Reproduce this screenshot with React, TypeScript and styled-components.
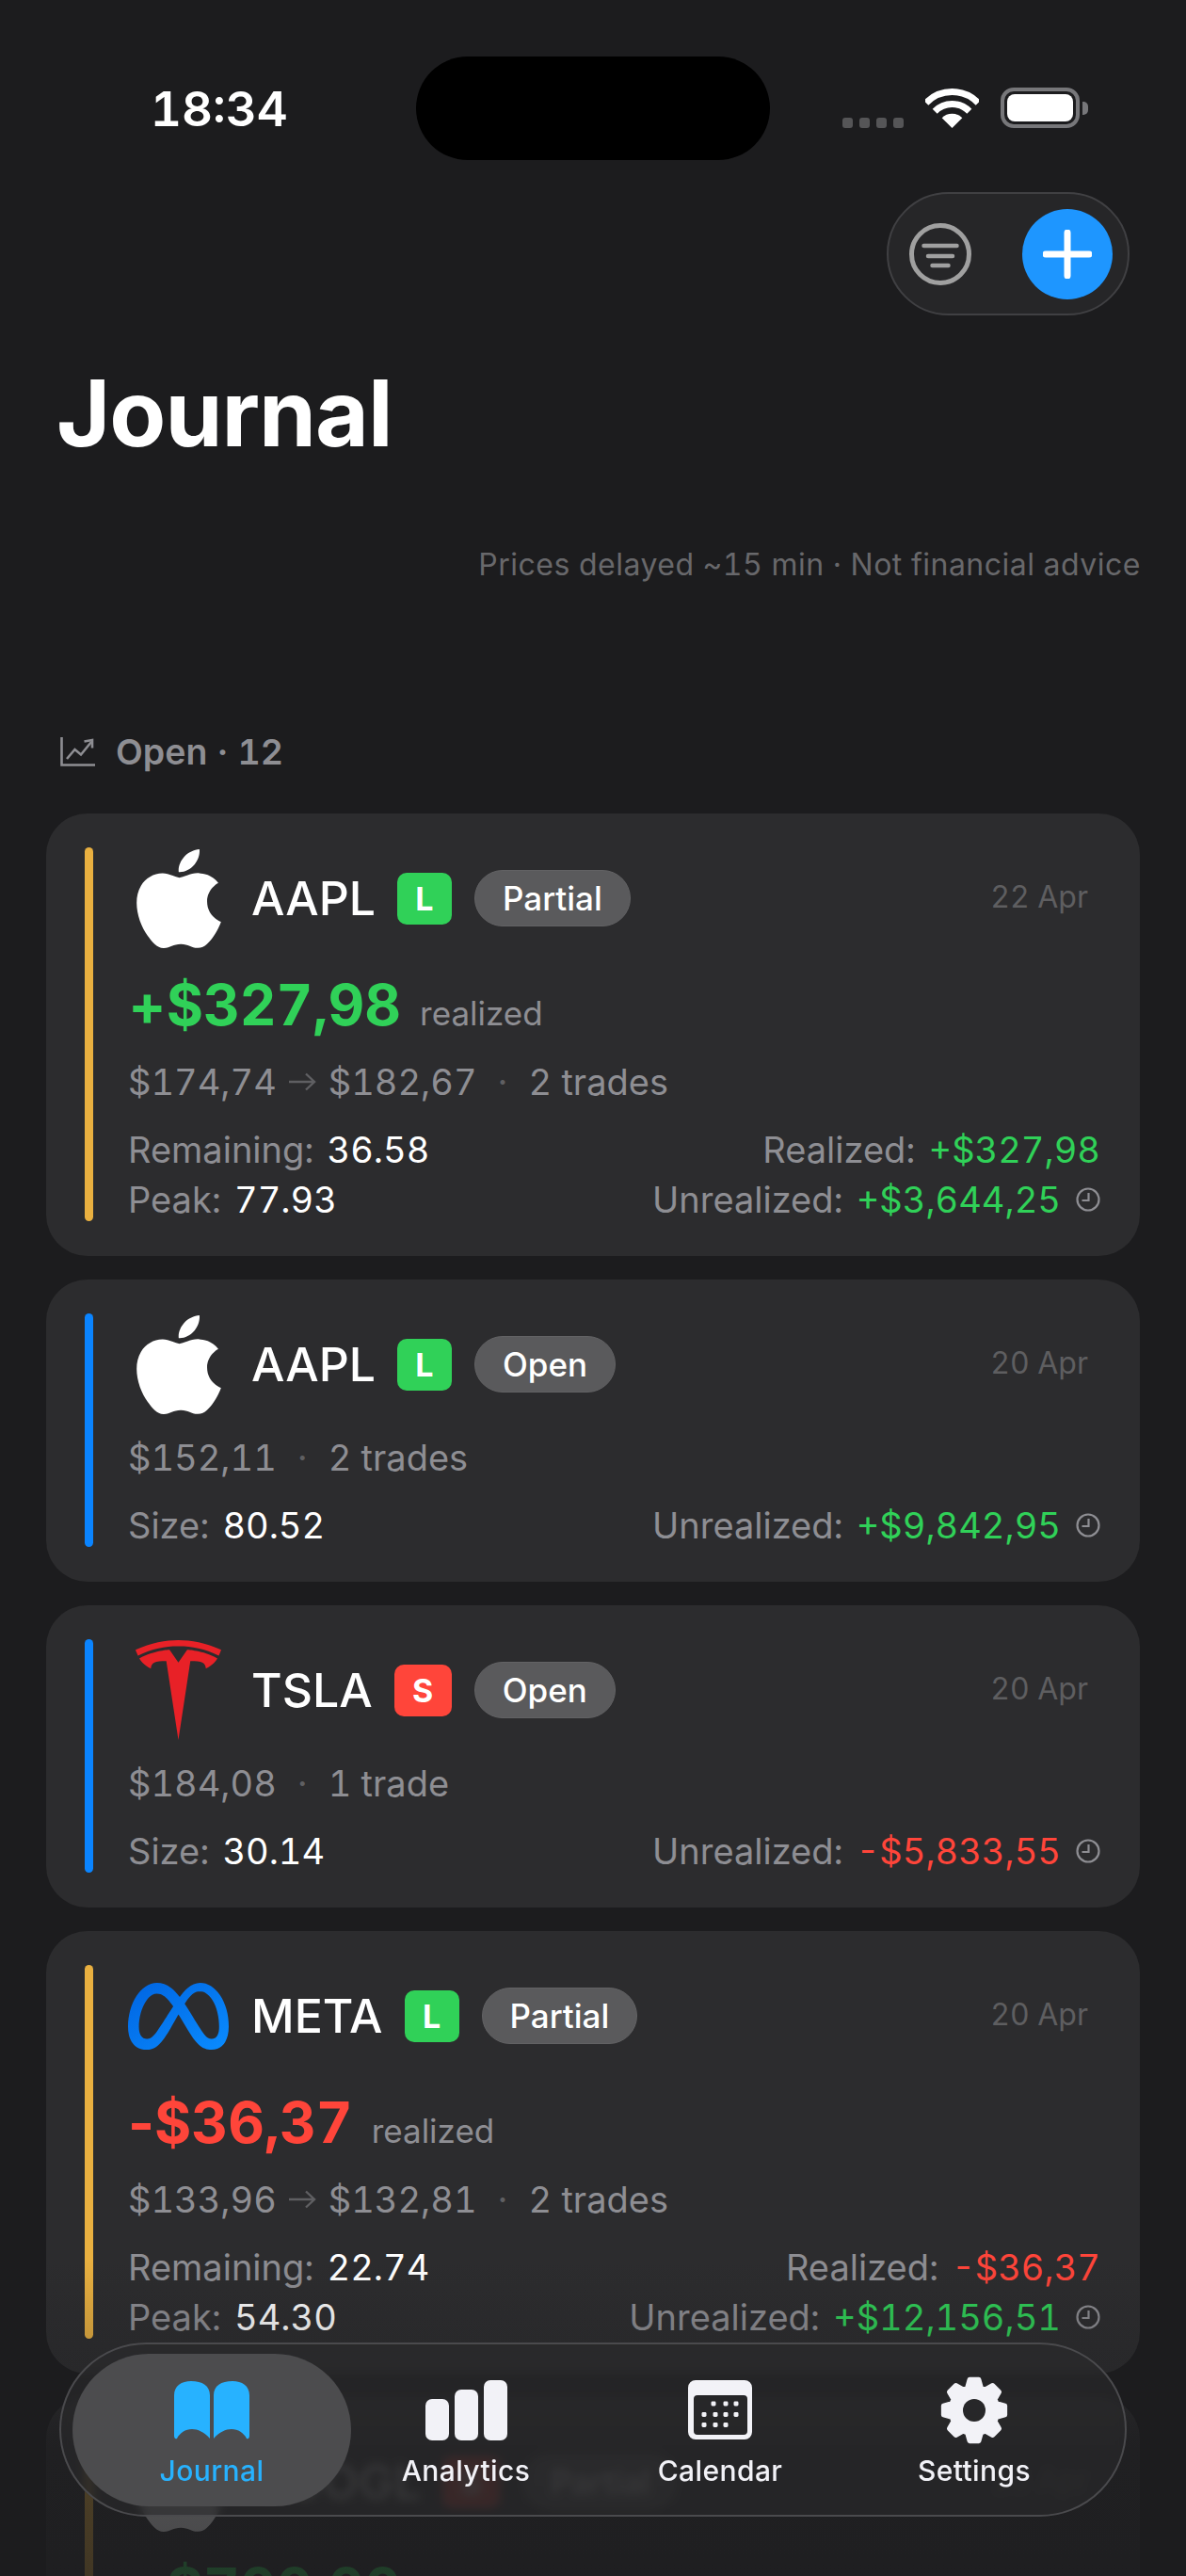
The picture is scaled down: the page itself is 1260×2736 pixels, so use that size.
import React from 'react';
import styled, { createGlobalStyle } from 'styled-components';
import { SiApple, SiTesla } from 'react-icons/si';

const GlobalStyle = createGlobalStyle`
  html, body { margin: 0; padding: 0; background: #1c1c1e; }
  * { box-sizing: border-box; }
`;

const Screen = styled.div`
  position: relative;
  width: 1260px;
  height: 2736px;
  overflow: hidden;
  padding-top: 60px;
  background: #1c1c1e;
  color: #fff;
  font-family: Inter, "Liberation Sans", sans-serif;
  font-variant-numeric: tabular-nums;
`;

const StatusBar = styled.div`
  display: grid;
  grid-template-columns: 442px 376px 1fr;
  height: 110px;
`;

const Time = styled.div`
  padding: 25px 0 0 160px;
  font-size: 51px;
  line-height: 62px;
  font-weight: 600;
`;

const Island = styled.div`
  background: #000;
  border-radius: 55px;
`;

const StatusIcons = styled.div`
  display: flex;
  align-items: flex-end;
  height: 76px;
  padding-left: 77px;
`;

const SignalDots = styled.div`
  display: flex;
  gap: 7px;
  margin-right: 23px;
`;

const SignalDot = styled.span`
  width: 11px;
  height: 11px;
  border-radius: 3px;
  background: #555557;
`;

const Battery = styled.div`
  display: flex;
  align-items: center;
  margin-left: 23px;
`;

const BatteryBody = styled.div`
  width: 84px;
  height: 43px;
  padding: 3px;
  border: 4px solid #77777a;
  border-radius: 14px;
`;

const BatteryFill = styled.div`
  height: 100%;
  border-radius: 8px;
  background: #fff;
`;

const BatteryCap = styled.div`
  width: 6px;
  height: 14px;
  margin-left: 3px;
  border-radius: 0 5px 5px 0;
  background: #77777a;
`;

const Controls = styled.div`
  display: flex;
  justify-content: flex-end;
  margin-top: 34px;
  padding-right: 60px;
`;

const ControlPill = styled.div`
  display: flex;
  align-items: center;
  justify-content: space-between;
  width: 258px;
  height: 131px;
  padding: 0 16px 0 22px;
  border: 2px solid #404043;
  border-radius: 66px;
  background: #262628;
`;

const AddButton = styled.div`
  display: flex;
  align-items: center;
  justify-content: center;
  width: 96px;
  height: 96px;
  border-radius: 50%;
  background: #1e96ff;
`;

const Title = styled.h1`
  margin: 46px 0 0 60px;
  font-size: 98px;
  line-height: 116px;
  font-weight: 700;
  letter-spacing: -1px;
`;

const Disclaimer = styled.div`
  margin-top: 83px;
  padding-right: 48px;
  text-align: right;
  font-size: 32px;
  line-height: 40px;
  letter-spacing: 0.5px;
  color: #68686b;
`;

const SectionHead = styled.div`
  display: flex;
  align-items: center;
  gap: 22px;
  height: 44px;
  margin-top: 156px;
  padding-left: 64px;
  font-size: 37.5px;
  font-weight: 600;
  color: #8e8e93;
`;

const CardList = styled.div`
  display: flex;
  flex-direction: column;
  gap: 25px;
  margin-top: 44px;
  padding: 0 49px;
`;

const Card = styled.div`
  display: flex;
  gap: 37px;
  padding: 36px 42px 37px 41px;
  border-radius: 44px;
  background: #2c2c2e;
`;

const AccentBar = styled.div<{ $color: string }>`
  flex: 0 0 9px;
  border-radius: 5px;
  background: ${p => p.$color};
`;

const CardBody = styled.div`
  flex: 1;
  min-width: 0;
`;

const CardHeader = styled.div`
  display: flex;
  align-items: center;
  height: 108px;
`;

const LogoBox = styled.div`
  display: flex;
  align-items: center;
  justify-content: center;
  flex: 0 0 107px;
  margin-right: 24px;
`;

const AppleLogo = styled(SiApple)`
  flex: none;
  width: 110px;
  height: 105px;
  margin: 0 -2px;
  color: #fff;
`;

const TeslaLogo = styled(SiTesla)`
  width: 91px;
  height: 106px;
  color: #e82127;
`;

const Ticker = styled.div`
  margin-right: 23px;
  font-size: 50px;
  font-weight: 500;
`;

const SideBadge = styled.div<{ $short: boolean }>`
  display: flex;
  align-items: center;
  justify-content: center;
  width: ${p => (p.$short ? 61 : 58)}px;
  height: 55px;
  margin-right: 24px;
  border-radius: 10px;
  font-size: 34px;
  font-weight: 700;
  background: ${p => (p.$short ? '#ff453a' : '#30d158')};
`;

const StatusPill = styled.div`
  height: 60px;
  padding: 0 29px;
  border: 1px solid #626264;
  border-radius: 30px;
  font-size: 35px;
  line-height: 58px;
  font-weight: 500;
  background: #5a5a5c;
`;

const DateText = styled.div`
  margin-left: auto;
  padding: 0 13px 3px 0;
  font-size: 32px;
  color: #5e5e60;
`;

const RealizedRow = styled.div`
  display: flex;
  align-items: baseline;
  gap: 20px;
  height: 70px;
  margin-top: 24px;
  line-height: 70px;
`;

const BigAmount = styled.div<{ $color: string }>`
  font-size: 60px;
  font-weight: 700;
  color: ${p => p.$color};
`;

const BigSign = styled.span`
  font-variant-numeric: normal;
`;

const RealizedCaption = styled.div`
  font-size: 35px;
  color: #8e8e93;
`;

const PriceRow = styled.div`
  display: flex;
  align-items: center;
  height: 46px;
  margin-top: 24px;
  font-size: 38px;
  color: #8e8e93;

  ${CardHeader} + & {
    margin-top: 22px;
  }
`;

const PriceArrow = styled.svg`
  margin: 0 13px;
`;

const Dot = styled.span`
  margin: 0 22px;
  color: #5f5f62;
`;

const InfoBlock = styled.div`
  display: flex;
  flex-direction: column;
  gap: 7px;
  margin-top: 26px;
`;

const InfoRow = styled.div`
  display: flex;
  align-items: center;
  justify-content: space-between;
  height: 46px;
  font-size: 38px;
`;

const InfoText = styled.div`
  display: flex;
  align-items: center;
  color: #8e8e93;
`;

const InfoValue = styled.span<{ $color?: string }>`
  margin-left: 14px;
  color: ${p => p.$color ?? '#fff'};
`;

const ClockIcon = styled.svg`
  margin-left: 16px;
`;

const Fade = styled.div`
  position: absolute;
  left: 0;
  right: 0;
  bottom: 0;
  height: 336px;
  background: linear-gradient(
    to bottom,
    rgba(28, 28, 30, 0) 0,
    rgba(28, 28, 30, 0.25) 120px,
    rgba(28, 28, 30, 0.75) 200px,
    rgba(28, 28, 30, 0.82) 100%
  );
  pointer-events: none;
`;

const TabBar = styled.div`
  position: absolute;
  left: 63px;
  bottom: 63px;
  display: grid;
  grid-template-columns: repeat(4, 1fr);
  align-items: center;
  width: 1134px;
  height: 185px;
  padding: 0 25px;
  border: 2px solid #4a4a4d;
  border-radius: 93px;
  background: rgba(42, 42, 44, 0.6);
  backdrop-filter: blur(5px);
`;

const Tab = styled.div<{ $active?: boolean }>`
  position: relative;
  display: flex;
  flex-direction: column;
  align-items: center;
  gap: 10px;
  height: 162px;
  padding-top: 24px;
  font-size: 30px;
  line-height: 36px;
  font-weight: 500;
  letter-spacing: 0.4px;
  color: ${p => (p.$active ? '#27b2ff' : '#f2f2f7')};

  &::before {
    content: '';
    display: ${p => (p.$active ? 'block' : 'none')};
    position: absolute;
    inset: 0 -13px;
    border-radius: 81px;
    background: #4c4c4e;
  }
`;

const TabIcon = styled.div`
  position: relative;
  display: flex;
  align-items: center;
  justify-content: center;
  height: 72px;
`;

const TabLabel = styled.div`
  position: relative;
`;

const GREEN = '#30d158';
const RED = '#ff453a';
const AMBER = '#e9b040';
const BLUE = '#0a84ff';

const META_PATH =
  'M6.915 4.03c-1.968 0-3.683 1.28-4.871 3.113C.704 9.208 0 11.883 0 14.449c0 .706.07 1.369.21 1.973a6.624 6.624 0 0 0 .265.86 5.297 5.297 0 0 0 .371.761c.696 1.159 1.818 1.927 3.593 1.927 1.497 0 2.633-.671 3.965-2.444.76-1.012 1.144-1.626 2.663-4.32l.756-1.339.186-.325c.061.1.121.196.183.3l2.152 3.595c.724 1.21 1.665 2.556 2.47 3.314 1.046.987 1.992 1.22 3.06 1.22 1.075 0 1.876-.355 2.455-.843a3.743 3.743 0 0 0 .81-.973c.542-.939.861-2.127.861-3.745 0-2.72-.681-5.357-2.084-7.45-1.282-1.912-2.957-2.93-4.716-2.93-1.047 0-2.088.467-3.053 1.308-.652.57-1.257 1.29-1.82 2.05-.69-.875-1.335-1.547-1.958-2.056-1.182-.966-2.315-1.303-3.454-1.303zm10.16 2.053c1.147 0 2.188.758 2.992 1.999 1.132 1.748 1.647 4.195 1.647 6.4 0 1.548-.368 2.9-1.839 2.9-.58 0-1.027-.23-1.664-1.004-.496-.601-1.343-1.878-2.832-4.358l-.617-1.028a44.908 44.908 0 0 0-1.255-1.98c.07-.109.141-.224.211-.327 1.12-1.667 2.118-2.602 3.358-2.602zm-10.201.553c1.265 0 2.058.791 2.675 1.446.307.327.737.871 1.234 1.579l-1.02 1.566c-.757 1.163-1.882 3.017-2.837 4.338-1.191 1.649-1.81 1.817-2.486 1.817-.524 0-1.038-.237-1.383-.794-.263-.426-.464-1.13-.464-2.046 0-2.221.63-4.535 1.66-6.088.454-.687.964-1.226 1.533-1.533a2.264 2.264 0 0 1 1.088-.285z';

const MetaLogo = () => (
  <svg width="107" height="107" viewBox="0 0 24 24">
    <defs>
      <linearGradient id="metaBlue" x1="0" y1="0" x2="1" y2="1">
        <stop offset="0" stopColor="#0064e1" />
        <stop offset="1" stopColor="#0a8cff" />
      </linearGradient>
    </defs>
    <path fill="url(#metaBlue)" d={META_PATH} />
  </svg>
);

const WifiIcon = () => (
  <svg width="57" height="42" viewBox="0 0 57 42" fill="none">
    <path d="M.8 15.3A38.5 38.5 0 0 1 56.2 15.3" stroke="#fff" strokeWidth="7" />
    <path d="M10.2 24.3A25.5 25.5 0 0 1 46.8 24.3" stroke="#fff" strokeWidth="7" />
    <path d="M28.5 42L17.7 31.2A15.3 15.3 0 0 1 39.3 31.2Z" fill="#fff" />
  </svg>
);

const FilterIcon = () => (
  <svg width="66" height="66" viewBox="0 0 66 66" fill="none" stroke="#a0a0a0">
    <circle cx="33" cy="33" r="30.5" strokeWidth="5" />
    <g strokeWidth="4.5" strokeLinecap="round">
      <path d="M15.5 24h35" />
      <path d="M20 35h26" />
      <path d="M24.5 45h17" />
    </g>
  </svg>
);

const PlusIcon = () => (
  <svg width="52" height="52" viewBox="0 0 52 52" fill="none" stroke="#fff" strokeWidth="7" strokeLinecap="round">
    <path d="M26 3v46M3 26h46" />
  </svg>
);

const TrendIcon = () => (
  <svg width="37" height="31" viewBox="0 0 37 31" fill="none" stroke="#8e8e93" strokeWidth="2.6">
    <path d="M1.5 0v29.5H37" />
    <path d="M7 23l8.5-10 6.5 5.5L33 5" />
    <path d="M25.5 4.5l8.5-1.5v8.5" />
  </svg>
);

const Arrow = () => (
  <PriceArrow width="29" height="20" viewBox="0 0 29 20" fill="none" stroke="#5f5f62" strokeWidth="2.4">
    <path d="M0 10h27M18 1.5l9 8.5-9 8.5" />
  </PriceArrow>
);

const Clock = () => (
  <ClockIcon width="26" height="26" viewBox="0 0 26 26" fill="none" stroke="#8e8e93" strokeWidth="2.2">
    <circle cx="13" cy="13" r="11.5" />
    <path d="M13.5 6v8H6.5" />
  </ClockIcon>
);

const BookIcon = () => (
  <svg width="80" height="62" viewBox="0 0 80 62" fill="#27b2ff">
    <path d="M0 15C0 5 8 0 18 0C30 0 38 5 38 15V61C32 54 25 51 19 51C12 51 6 55 3 61C1 62 0 60 0 58Z" />
    <path d="M80 15C80 5 72 0 62 0C50 0 42 5 42 15V61C48 54 55 51 61 51C68 51 74 55 77 61C79 62 80 60 80 58Z" />
  </svg>
);

const BarsIcon = () => (
  <svg width="87" height="64" viewBox="0 0 87 64" fill="#f2f2f7">
    <rect x="0" y="20" width="25" height="44" rx="7" />
    <rect x="31" y="10" width="25" height="54" rx="7" />
    <rect x="62" y="0" width="25" height="64" rx="7" />
  </svg>
);

const CALENDAR_DOTS = [
  [27, 25], [40, 25], [51, 25],
  [17, 36.5], [29, 36.5], [40, 36.5], [51, 36.5],
  [17, 47.5], [29, 47.5], [40, 47.5],
];

const CalendarIcon = () => (
  <svg width="68" height="63" viewBox="0 0 68 63" fill="#f2f2f7">
    <path
      fillRule="evenodd"
      d="M8 0H60A8 8 0 0 1 68 8V55A8 8 0 0 1 60 63H8A8 8 0 0 1 0 55V8A8 8 0 0 1 8 0ZM10 16A4 4 0 0 0 6 20V54A4 4 0 0 0 10 58H59A4 4 0 0 0 63 54V20A4 4 0 0 0 59 16Z"
    />
    {CALENDAR_DOTS.map(([x, y]) => (
      <rect key={`${x}-${y}`} x={x - 2.5} y={y - 2.5} width="5" height="5" rx="1.4" />
    ))}
  </svg>
);

// 8 tooth gear, corners rounded by the stroke
const gearPath = () => {
  const pts: string[] = [];
  for (let i = 0; i < 8; i++) {
    const a = (i * Math.PI) / 4 - Math.PI / 2;
    const spots: [number, number][] = [[-0.3, 25], [-0.15, 33], [0.15, 33], [0.3, 25]];
    spots.forEach(([da, r]) => {
      pts.push(`${(36 + r * Math.cos(a + da)).toFixed(2)} ${(36 + r * Math.sin(a + da)).toFixed(2)}`);
    });
  }
  return `M${pts.join('L')}Z`;
};

const GearIcon = () => (
  <svg width="72" height="72" viewBox="0 0 72 72">
    <defs>
      <mask id="gearHole">
        <rect width="72" height="72" fill="#fff" />
        <circle cx="36" cy="36" r="12" fill="#000" />
      </mask>
    </defs>
    <path d={gearPath()} fill="#f2f2f7" stroke="#f2f2f7" strokeWidth="5" strokeLinejoin="round" mask="url(#gearHole)" />
  </svg>
);

type Trade = {
  logo: React.ReactNode;
  ticker: string;
  short?: boolean;
  status: string;
  date: string;
  bar: string;
  realized?: { sign: string; text: string; color: string };
  prices: string[];
  trades: string;
  left: [string, string][];
  right: { label: string; value: string; color: string; clock?: boolean }[];
};

const trades: Trade[] = [
  {
    logo: <AppleLogo preserveAspectRatio="none" />,
    ticker: 'AAPL',
    status: 'Partial',
    date: '22 Apr',
    bar: AMBER,
    realized: { sign: '+', text: '$327,98', color: GREEN },
    prices: ['$174,74', '$182,67'],
    trades: '2 trades',
    left: [['Remaining:', '36.58'], ['Peak:', '77.93']],
    right: [
      { label: 'Realized:', value: '+$327,98', color: GREEN },
      { label: 'Unrealized:', value: '+$3,644,25', color: GREEN, clock: true },
    ],
  },
  {
    logo: <AppleLogo preserveAspectRatio="none" />,
    ticker: 'AAPL',
    status: 'Open',
    date: '20 Apr',
    bar: BLUE,
    prices: ['$152,11'],
    trades: '2 trades',
    left: [['Size:', '80.52']],
    right: [{ label: 'Unrealized:', value: '+$9,842,95', color: GREEN, clock: true }],
  },
  {
    logo: <TeslaLogo preserveAspectRatio="none" />,
    ticker: 'TSLA',
    short: true,
    status: 'Open',
    date: '20 Apr',
    bar: BLUE,
    prices: ['$184,08'],
    trades: '1 trade',
    left: [['Size:', '30.14']],
    right: [{ label: 'Unrealized:', value: '-$5,833,55', color: RED, clock: true }],
  },
  {
    logo: <MetaLogo />,
    ticker: 'META',
    status: 'Partial',
    date: '20 Apr',
    bar: AMBER,
    realized: { sign: '-', text: '$36,37', color: RED },
    prices: ['$133,96', '$132,81'],
    trades: '2 trades',
    left: [['Remaining:', '22.74'], ['Peak:', '54.30']],
    right: [
      { label: 'Realized:', value: '-$36,37', color: RED },
      { label: 'Unrealized:', value: '+$12,156,51', color: GREEN, clock: true },
    ],
  },
  {
    logo: <AppleLogo preserveAspectRatio="none" />,
    ticker: 'GOOGL',
    short: true,
    status: 'Partial',
    date: '18 Apr',
    bar: AMBER,
    realized: { sign: '+', text: '$700,00', color: GREEN },
    prices: ['$160,20', '$152,10'],
    trades: '2 trades',
    left: [],
    right: [],
  },
];

const TradeCard = ({ t }: { t: Trade }) => (
  <Card>
    <AccentBar $color={t.bar} />
    <CardBody>
      <CardHeader>
        <LogoBox>{t.logo}</LogoBox>
        <Ticker>{t.ticker}</Ticker>
        <SideBadge $short={!!t.short}>{t.short ? 'S' : 'L'}</SideBadge>
        <StatusPill>{t.status}</StatusPill>
        <DateText>{t.date}</DateText>
      </CardHeader>
      {t.realized && (
        <RealizedRow>
          <BigAmount $color={t.realized.color}>
            <BigSign>{t.realized.sign}</BigSign>
            {t.realized.text}
          </BigAmount>
          <RealizedCaption>realized</RealizedCaption>
        </RealizedRow>
      )}
      <PriceRow>
        {t.prices[0]}
        {t.prices[1] && <Arrow />}
        {t.prices[1]}
        <Dot>·</Dot>
        {t.trades}
      </PriceRow>
      <InfoBlock>
        {t.left.map((l, i) => (
          <InfoRow key={l[0]}>
            <InfoText>
              {l[0]}
              <InfoValue>{l[1]}</InfoValue>
            </InfoText>
            <InfoText>
              {t.right[i].label}
              <InfoValue $color={t.right[i].color}>{t.right[i].value}</InfoValue>
              {t.right[i].clock && <Clock />}
            </InfoText>
          </InfoRow>
        ))}
      </InfoBlock>
    </CardBody>
  </Card>
);

export default function App() {
  return (
    <Screen>
      <GlobalStyle />
      <StatusBar>
        <Time>18:34</Time>
        <Island />
        <StatusIcons>
          <SignalDots>
            <SignalDot />
            <SignalDot />
            <SignalDot />
            <SignalDot />
          </SignalDots>
          <WifiIcon />
          <Battery>
            <BatteryBody>
              <BatteryFill />
            </BatteryBody>
            <BatteryCap />
          </Battery>
        </StatusIcons>
      </StatusBar>

      <Controls>
        <ControlPill>
          <FilterIcon />
          <AddButton>
            <PlusIcon />
          </AddButton>
        </ControlPill>
      </Controls>

      <Title>Journal</Title>
      <Disclaimer>Prices delayed ~15 min · Not financial advice</Disclaimer>

      <SectionHead>
        <TrendIcon />
        Open · 12
      </SectionHead>

      <CardList>
        {trades.map((t, i) => (
          <TradeCard key={i} t={t} />
        ))}
      </CardList>

      <Fade />

      <TabBar>
        <Tab $active>
          <TabIcon><BookIcon /></TabIcon>
          <TabLabel>Journal</TabLabel>
        </Tab>
        <Tab>
          <TabIcon><BarsIcon /></TabIcon>
          <TabLabel>Analytics</TabLabel>
        </Tab>
        <Tab>
          <TabIcon><CalendarIcon /></TabIcon>
          <TabLabel>Calendar</TabLabel>
        </Tab>
        <Tab>
          <TabIcon><GearIcon /></TabIcon>
          <TabLabel>Settings</TabLabel>
        </Tab>
      </TabBar>
    </Screen>
  );
}
